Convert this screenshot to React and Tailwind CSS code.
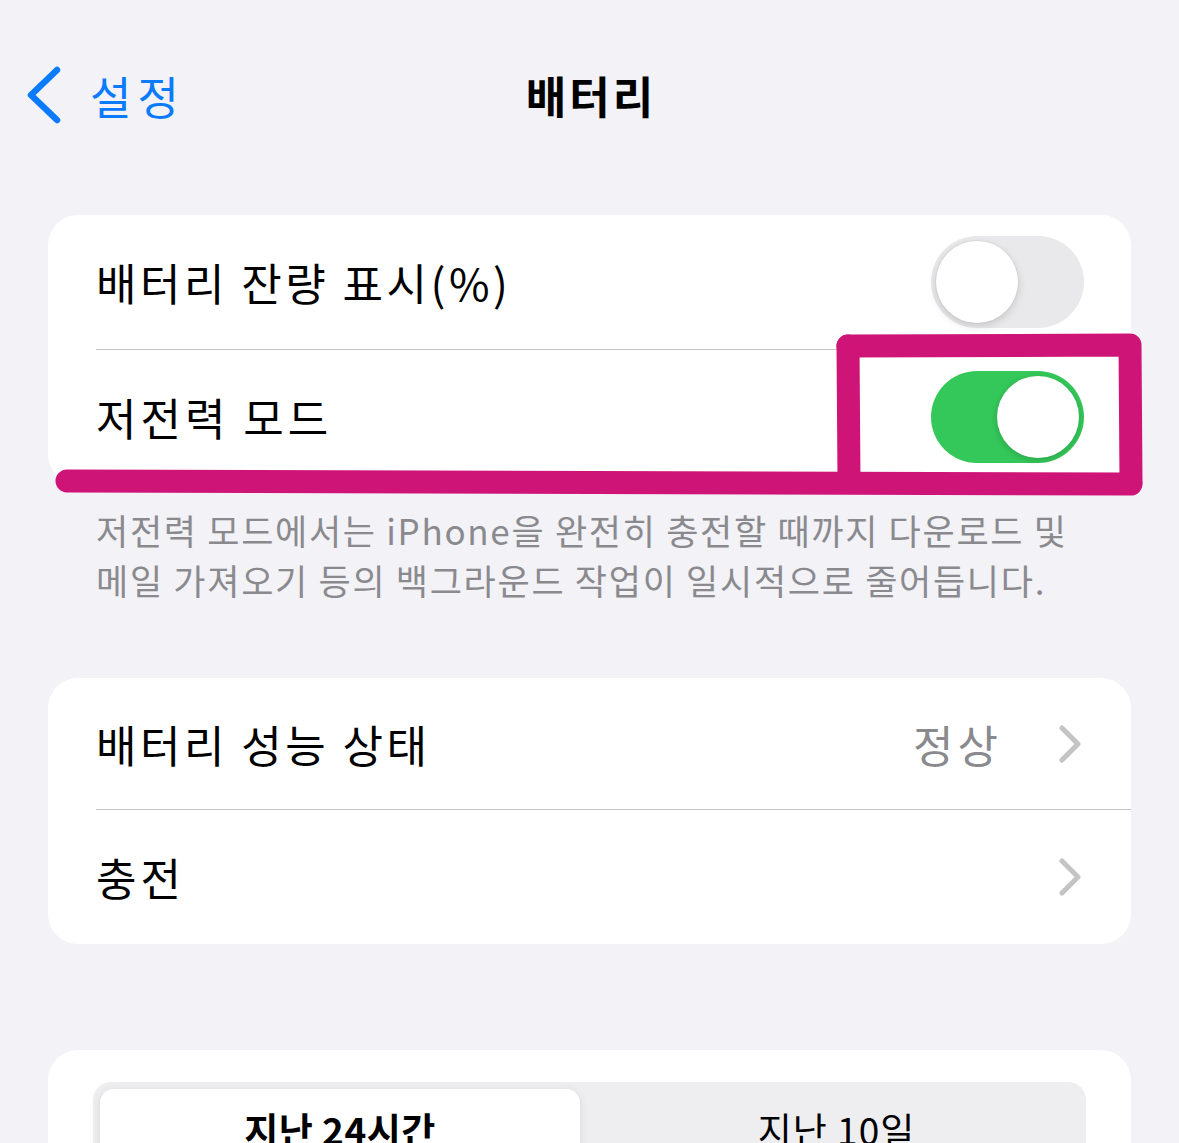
import React from "react";

const font = "font-['Noto_Sans_CJK_KR','Noto_Sans',sans-serif]";

function Toggle({ on }) {
  return (
    <div
      className={`relative h-[92px] w-[153px] shrink-0 rounded-full ${
        on ? "bg-[#34c759]" : "bg-[#e9e9eb]"
      }`}
    >
      <div
        className={`absolute top-[5px] h-[82px] w-[82px] rounded-full bg-white ${
          on
            ? "right-[5px] shadow-[0_2px_6px_rgba(0,0,0,0.18)]"
            : "left-[5px] shadow-[0_3px_8px_rgba(0,0,0,0.15),0_0_0_1px_rgba(0,0,0,0.04)]"
        }`}
      />
    </div>
  );
}

function Chevron() {
  return (
    <svg width="24" height="38" viewBox="0 0 24 38" className="shrink-0">
      <path
        d="M4 3 L20 19 L4 35"
        fill="none"
        stroke="#c4c4c7"
        strokeWidth="5"
        strokeLinecap="round"
        strokeLinejoin="round"
      />
    </svg>
  );
}

function Separator() {
  return <div className="ml-[48px] h-px bg-[#c6c6c8]" />;
}

export default function App() {
  return (
    <div className={`relative h-[1143px] w-[1179px] overflow-hidden bg-[#f2f2f7] ${font}`}>
      {/* navigation bar */}
      <div className="grid h-[190px] grid-cols-[1fr_auto_1fr] items-center">
        <div className="flex items-center pl-[26px]">
          <svg width="40" height="58" viewBox="0 0 40 58">
            <path
              d="M31 4 L5 29 L31 54"
              fill="none"
              stroke="#0a7aff"
              strokeWidth="6.5"
              strokeLinecap="round"
              strokeLinejoin="round"
            />
          </svg>
          <span className="ml-[24px] text-[45px] leading-none tracking-[6px] text-[#0a7aff]">설정</span>
        </div>
        <div className="pl-[3px] text-[44px] font-bold leading-none tracking-[3px] text-black">배터리</div>
        <div />
      </div>

      <div className="px-[48px] pt-[25px]">
        {/* battery display / low power */}
        <div className="overflow-hidden rounded-[30px] bg-white">
          <div className="flex h-[134px] items-center justify-between pl-[48px] pr-[47px]">
            <span className="text-[44px] leading-none tracking-[3.5px] text-black">배터리 잔량 표시(%)</span>
            <Toggle on={false} />
          </div>
          <Separator />
          <div className="flex h-[134px] items-center justify-between pl-[48px] pr-[47px]">
            <span className="text-[44px] leading-none tracking-[4px] text-black">저전력 모드</span>
            <Toggle on />
          </div>
        </div>

        <p className="mt-[21px] pl-[48px] text-[35px] leading-[50px] tracking-[1.7px] text-[#8a8a8e]">
          저전력 모드에서는 iPhone을 완전히 충전할 때까지 다운로드 및
          <br />
          메일 가져오기 등의 백그라운드 작업이 일시적으로 줄어듭니다.
        </p>

        {/* health / charging */}
        <div className="mt-[73px] overflow-hidden rounded-[30px] bg-white">
          <div className="flex h-[131px] items-center pl-[48px] pr-[49px]">
            <span className="flex-1 text-[44px] leading-none tracking-[3.5px] text-black">배터리 성능 상태</span>
            <span className="mr-[56px] text-[44px] leading-none tracking-[4px] text-[#8a8a8e]">정상</span>
            <Chevron />
          </div>
          <Separator />
          <div className="flex h-[134px] items-center pl-[48px] pr-[49px]">
            <span className="flex-1 text-[44px] leading-none tracking-[4px] text-black">충전</span>
            <Chevron />
          </div>
        </div>

        {/* usage period picker */}
        <div className="mt-[106px] rounded-t-[30px] bg-white px-[45px] pb-[40px] pt-[32px]">
          <div className="flex rounded-[18px] bg-[#eeeef0] p-[7px]">
            <div className="flex h-[90px] w-[480px] justify-center rounded-[14px] bg-white pt-[22px] text-[37px] font-semibold leading-none tracking-[0.5px] text-black shadow-[0_2px_8px_rgba(0,0,0,0.1)]">
              지난 24시간
            </div>
            <div className="flex h-[90px] flex-1 justify-center pl-[14px] pt-[22px] text-[37px] font-normal leading-none tracking-[1px] text-black">
              지난 10일
            </div>
          </div>
        </div>
      </div>

      {/* hand-drawn highlight */}
      <svg
        className="pointer-events-none absolute left-0 top-0"
        width="1179"
        height="1143"
        viewBox="0 0 1179 1143"
      >
        <g fill="none" stroke="#cf1478" strokeWidth="23" strokeLinecap="round" strokeLinejoin="round">
          <path d="M848 346 L1130 345 L1131 482" />
          <path d="M848 346 L849 480" />
          <path d="M67 481 L1131 484" />
        </g>
      </svg>
    </div>
  );
}
